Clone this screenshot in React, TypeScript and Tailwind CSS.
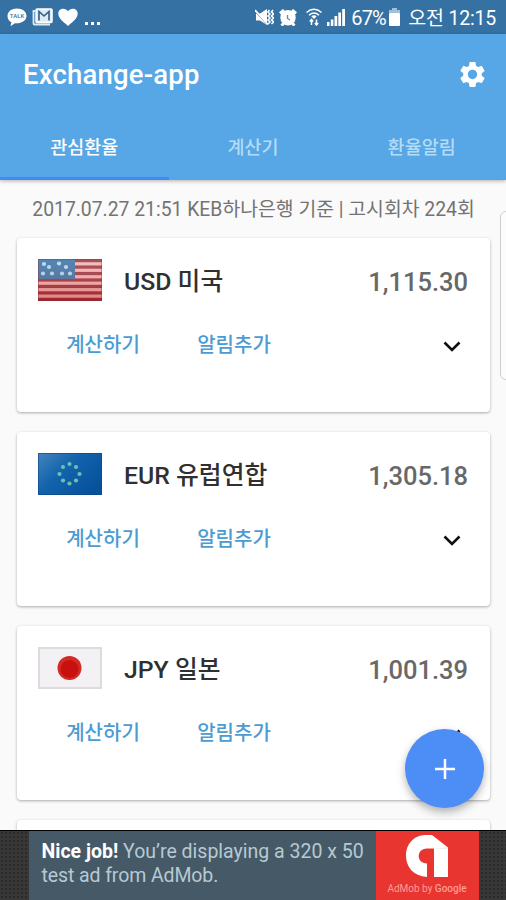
import { MdSettings } from "react-icons/md";

type Rate = {
  code: string;
  country: string;
  price: string;
  flag: React.ReactNode;
};

// Flags
const UsaFlag = () => (
  <svg className="block h-[42px] w-16" viewBox="0 0 64 42">
    <defs>
      <linearGradient id="usa-shade" x1="0" y1="0" x2="0" y2="1">
        <stop offset="0" stopColor="#fff" stopOpacity="0.15" />
        <stop offset="1" stopColor="#a00" stopOpacity="0.3" />
      </linearGradient>
    </defs>
    <rect width="64" height="42" fill="#f5b5b5" />
    {[0, 1, 2, 3, 4, 5, 6].map((i) => (
      <rect key={i} y={i * 6.46} width="64" height="3.23" fill="#99333c" />
    ))}
    <rect width="37" height="20" fill="#3570a5" />
    {[
      [6, 5], [21, 4.5], [11, 8], [28, 8], [5, 14.5], [14, 14.5], [24, 14.5], [32, 14.5],
    ].map(([x, y]) => (
      <circle key={`${x}-${y}`} cx={x} cy={y} r="2.1" fill="#a9ddf6" />
    ))}
    <rect width="64" height="42" fill="url(#usa-shade)" />
    <rect x="0.5" y="0.5" width="63" height="41" fill="none" stroke="#8a3040" strokeOpacity="0.4" />
  </svg>
);

const EuFlag = () => (
  <svg className="block h-[42px] w-16" viewBox="0 0 64 42">
    <defs>
      <linearGradient id="eu-shade" x1="0" y1="0" x2="1" y2="0.7">
        <stop offset="0" stopColor="#4484bd" />
        <stop offset="0.45" stopColor="#1264ac" />
        <stop offset="1" stopColor="#07519c" />
      </linearGradient>
    </defs>
    <rect width="64" height="42" fill="url(#eu-shade)" />
    {[
      [31.5, 11], [38, 14], [41.5, 21], [38, 27.5], [31.5, 30.5], [25, 27.5], [21.5, 21], [25, 14],
    ].map(([x, y]) => (
      <circle key={`${x}-${y}`} cx={x} cy={y} r="2.1" fill="#6fbeb4" />
    ))}
    <rect x="0.5" y="0.5" width="63" height="41" fill="none" stroke="#0d4680" strokeOpacity="0.6" />
  </svg>
);

const JapanFlag = () => (
  <svg className="block h-[42px] w-16" viewBox="0 0 64 42">
    <rect width="64" height="42" fill="#f3f1f4" />
    <rect x="1" y="1" width="62" height="40" fill="none" stroke="#dcdcde" strokeWidth="2" />
    <circle cx="31.5" cy="21" r="12" fill="#d42a25" />
    <circle cx="31.5" cy="22" r="9" fill="#c8100f" />
  </svg>
);

const rates: Rate[] = [
  { code: "USD", country: "미국", price: "1,115.30", flag: <UsaFlag /> },
  { code: "EUR", country: "유럽연합", price: "1,305.18", flag: <EuFlag /> },
  { code: "JPY", country: "일본", price: "1,001.39", flag: <JapanFlag /> },
];

const StatusBar = () => (
  <div className="flex h-[34px] items-center justify-between bg-[#3572a3] pl-[7px] pr-[10px] text-white">
    {/* Notifications */}
    <div className="flex items-center">
      <svg className="h-[19px] w-5" viewBox="0 0 20 19">
        <path
          d="M10 0.5C4.5 0.5 0.5 3.6 0.5 8c0 2.700 1.500 5 3.900 6.300L3.500 18.300l4.400-3.100c5.900 .8 11.600-2.500 11.600-7.200C19.500 3.600 15.500 .5 10 .5z"
          fill="#fff"
        />
        <text x="10" y="10.300" textAnchor="middle" fontSize="6" fontWeight="500" fontFamily="Roboto, sans-serif" fill="#3572a3">
          TALK
        </text>
      </svg>
      <svg className="ml-[5px] h-[18px] w-[21px]" viewBox="0 0 21 18" fill="none">
        <path d="M3 3H1.500v12.500q0 1 1 1H18" stroke="#dcecf7" strokeWidth="1.800" />
        <rect x="4" y="1" width="16" height="13.500" rx="1" fill="#dcecf7" stroke="#fff" strokeWidth="1.500" />
        <path d="M7 12.500V3.500l5 4.500 5-4.500v9" stroke="#2f5f88" strokeWidth="1.600" />
      </svg>
      <svg className="ml-[5px] h-[19px] w-5" viewBox="0 0 20 19">
        <path d="M10 18C4 13 .3 10 .3 5.600 .3 2.700 2.500.7 5.200.7 7.200.7 9 1.700 10 3.300 11 1.700 12.800.7 14.800.7c2.700 0 4.900 2 4.900 4.900C19.700 10 16 13 10 18z" fill="#fff" />
      </svg>
      <div className="ml-[7px] mt-[13px] flex gap-[3px]">
        <span className="size-[3px] bg-white" />
        <span className="size-[3px] bg-white" />
        <span className="size-[3px] bg-white" />
      </div>
    </div>

    {/* System */}
    <div className="flex items-center">
      <svg className="h-[18px] w-[19px]" viewBox="0 0 19 18" fill="none" stroke="#fff">
        <path d="M1 5.500h4L12 1v16l-7-4.500H1z" fill="#fff" stroke="none" />
        <path d="M1 4l11 12" stroke="#3572a3" strokeWidth="1.200" />
        <path d="M0 2l13 14.500" strokeWidth="1.800" />
        <path d="M14.500 2L13 4l2 2-2 2 2 2-2 2 2 2-2 2M18 2l-1.500 2 2 2-2 2 2 2-2 2 2 2-2 2" strokeWidth="1.600" />
      </svg>
      <svg className="ml-[5px] h-[17px] w-[18px]" viewBox="0 0 18 17" fill="none" stroke="#fff">
        <circle cx="9" cy="8.800" r="7.700" fill="#fff" stroke="none" />
        <path d="M1 4.500l4-3.500M17 4.500l-4-3.500M2.500 16.500l2-2M15.500 16.500l-2-2" strokeWidth="3" />
        <path d="M8.500 6v3.500l2.500 1.500" stroke="#5d8db3" strokeWidth="1.300" />
      </svg>
      <svg className="ml-[9px] h-[18px] w-4" viewBox="0 0 16 18" fill="none" stroke="#fff" strokeWidth="1.500">
        <path d="M.5 4.500Q8-2 15.500 4.500M3 7.300Q8 2.800 13 7.300" />
        <path d="M8 11L5.300 8.300Q8 6 10.700 8.300z" fill="#fff" stroke="none" />
        <path d="M5.500 17v-5M3.800 13.500l1.700-2 1.700 2M10.500 11.500v5M8.800 15l1.700 2 1.700-2" strokeWidth="1.500" />
      </svg>
      <svg className="ml-[5px] h-[18px] w-[18px]" viewBox="0 0 18 18" fill="#fff">
        <path d="M0 14h2.500v4H0zM3.800 11.500h2.600V18H3.800zM7.500 8h2.700v10H7.500zM11.300 4.500H14V18h-2.700zM15.200 1H18v17h-2.800z" />
      </svg>
      <span className="ml-[6px] w-[34px] whitespace-nowrap pt-0.5 text-[20px] leading-none tracking-[-0.9px]">67%</span>
      <svg className="ml-[4px] h-[18px] w-[11px]" viewBox="0 0 11 18">
        <path d="M3 0h5v2h3v3H0V2h3z" fill="#9fc0d8" />
        <rect y="5" width="11" height="13" rx="1" fill="#fff" />
      </svg>
      <span className="ml-[8px] whitespace-nowrap pt-[3px] text-[19.500px] leading-none tracking-[-0.2px]">오전 12:15</span>
    </div>
  </div>
);

const Header = () => (
  <header className="relative z-10 bg-[#57a6e5] shadow-[0_1px_4px_rgba(0,0,0,0.3)]">
    <div className="flex h-[80px] items-center justify-between pl-[23px] pr-[18px] text-white">
      <h1 className="whitespace-nowrap pt-0.5 text-[27.500px] font-medium leading-none tracking-[0.2px]">Exchange-app</h1>
      <MdSettings className="size-[31px]" />
    </div>

    {/* Tabs */}
    <nav className="grid h-[66px] grid-cols-3 text-[18.500px] font-medium text-[#b4dcf6]">
      <button className="border-b-[3px] border-[#448af7] pt-[7px] text-white">관심환율</button>
      <button className="border-b-[3px] border-transparent pt-[7px]">계산기</button>
      <button className="border-b-[3px] border-transparent pt-[7px]">환율알림</button>
    </nav>
  </header>
);

const RateCard = ({ code, country, price, flag }: Rate) => (
  <section className="h-[174px] rounded-[4px] bg-white px-[21px] pt-[21px] shadow-[0_1px_3px_rgba(0,0,0,0.32)]">
    {/* Currency */}
    <div className="flex h-[42px] items-center">
      {flag}
      <h2 className="ml-[22px] whitespace-nowrap pt-1 text-[24.800px] font-medium leading-none text-[#303030]">
        {code} {country}
      </h2>
      <span className="ml-auto mr-px whitespace-nowrap pt-[5px] text-[25.500px] font-medium leading-none text-[#686868]">{price}</span>
    </div>

    {/* Actions */}
    <div className="mt-[28px] flex h-8 items-center pl-[27px] pr-[8px] text-[20px] font-medium text-[#4c9bd2]">
      <button className="w-[76px] whitespace-nowrap">계산하기</button>
      <button className="ml-[55px] w-[76px] whitespace-nowrap">알림추가</button>
      <svg className="ml-auto mt-0.5 h-[11px] w-[18px]" viewBox="0 0 18 11" fill="none" stroke="#111" strokeWidth="2.600">
        <path d="M1.500 1.500L9 9l7.500-7.500" />
      </svg>
    </div>
  </section>
);

const AdBanner = () => (
  <footer className="absolute inset-x-0 bottom-0 z-20 flex h-[70px] justify-center border-t border-black bg-[#383838] bg-[radial-gradient(#2a2a2a_1px,transparent_1.500px)] bg-[size:4px_4px]">
    <div className="ml-px w-[347px] bg-[#455a66] pl-[13px] pt-[9px] text-[19.500px] leading-[23.500px] text-[#b7c9d3]">
      <p className="whitespace-nowrap"><b className="text-white">Nice job!</b> You’re displaying a 320 x 50</p>
      <p className="whitespace-nowrap tracking-[-0.1px]">test ad from AdMob.</p>
    </div>
    <div className="flex w-[103px] flex-col items-center bg-[#e83530] pt-1">
      <svg className="h-[42px] w-[42px]" viewBox="0 0 42 42">
        <path d="M20 0h6l16 12.500V42H28V13.500h-7c-11 0-11 15 0 15V42C7 41 0 32 0 20.500 0 8.500 8.500 0 20 0z" fill="#fff" />
        <path d="M28 13.500h14v-1z" fill="#ddd" />
      </svg>
      <p className="mt-[5px] whitespace-nowrap text-[10px] leading-[14px] text-[#ff9c94]">
        AdMob by <span className="font-medium">Google</span>
      </p>
    </div>
  </footer>
);

export default function App() {
  return (
    <div className="relative h-[900px] w-[506px] overflow-hidden bg-[#fafafa] font-['Roboto','Noto_Sans_CJK_KR',sans-serif]">
      <StatusBar />
      <Header />

      {/* Rates */}
      <main className="pl-[17px] pr-4">
        <p className="flex h-[58px] items-center justify-center whitespace-nowrap pt-px text-[19.350px] text-[#737373]">
          2017.07.27 21:51 KEB하나은행 기준 | 고시회차 224회
        </p>
        <div className="flex flex-col gap-5">
          {rates.map((rate) => (
            <RateCard key={rate.code} {...rate} />
          ))}
          <div className="h-[174px] rounded-[4px] bg-white shadow-[0_1px_3px_rgba(0,0,0,0.32)]" />
        </div>
      </main>

      {/* Edge panel handle */}
      <div className="absolute -right-3 top-[211px] h-[169px] w-[18px] rounded-[6px] border border-[#cfcfcf] bg-[#fcfcfc]" />

      {/* Add button */}
      <button className="absolute left-[405px] top-[729px] z-10 flex size-[79px] items-center justify-center rounded-full bg-[#4c8df6] shadow-[0_4px_8px_rgba(0,0,0,0.3)]">
        <svg className="size-5" viewBox="0 0 20 20" stroke="#fff" strokeWidth="2.500">
          <path d="M10 0v20M0 10h20" />
        </svg>
      </button>

      <AdBanner />
    </div>
  );
}
